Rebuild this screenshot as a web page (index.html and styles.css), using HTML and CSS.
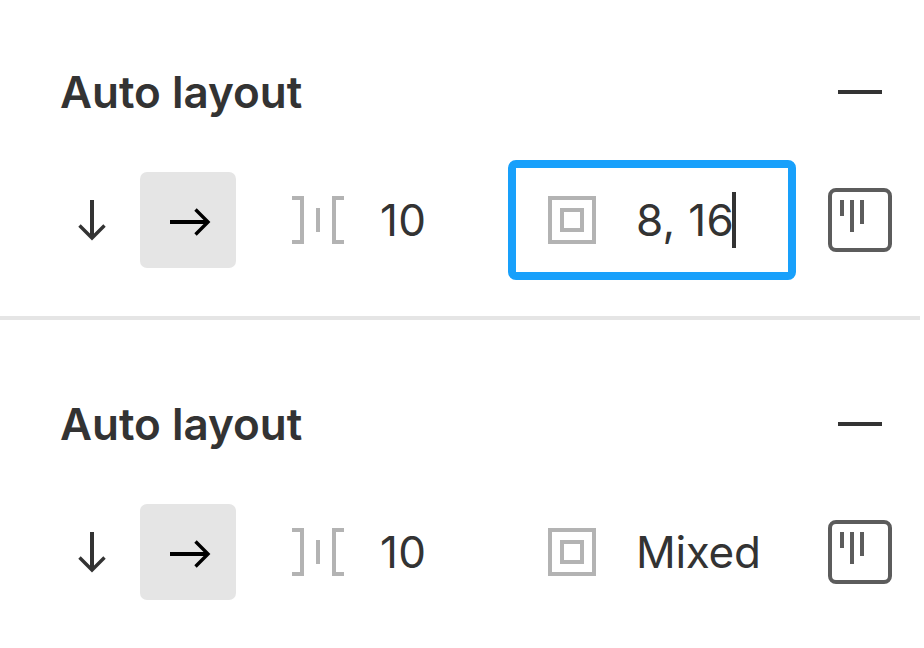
FILE: index.html
```html
<!DOCTYPE html>
<html lang="en">
<head>
<meta charset="utf-8">
<title>Auto layout</title>
<link rel="stylesheet" href="styles.css">
</head>
<body>
<svg class="defs" width="0" height="0">
  <symbol id="down" viewBox="0 0 32 48"><path d="M16 4V42" fill="none" stroke="currentColor" stroke-width="4"/><path d="M3.5 29.5L16 42L28.5 29.5" fill="none" stroke="currentColor" stroke-width="3.4"/></symbol>
  <symbol id="right" viewBox="0 0 48 32"><path d="M6 18H44" fill="none" stroke="currentColor" stroke-width="4"/><path d="M31.5 5.5L44 18L31.5 30.5" fill="none" stroke="currentColor" stroke-width="3.4"/></symbol>
  <symbol id="spacing" viewBox="0 0 52 48"><path d="M0 2H10V46H0M26 12V36M52 2H42V46H52" fill="none" stroke="currentColor" stroke-width="4"/></symbol>
  <symbol id="padding" viewBox="0 0 48 48"><path d="M2 2H46V46H2ZM14 14H34V34H14Z" fill="none" stroke="currentColor" stroke-width="4"/></symbol>
  <symbol id="align" viewBox="0 0 64 64"><rect x="2" y="2" width="60" height="60" rx="6" fill="none" stroke="currentColor" stroke-width="4"/><path d="M14 12V28M24 12V44M34 12V36" fill="none" stroke="currentColor" stroke-width="4"/></symbol>
</svg>
<main class="panels">
  <section class="panel">
    <header class="head"><h2 class="title">Auto layout</h2><span class="minus"></span></header>
    <div class="row">
      <span class="direction"><svg class="down"><use href="#down"/></svg></span>
      <span class="direction selected"><svg class="right"><use href="#right"/></svg></span>
      <div class="spacing"><svg class="gap"><use href="#spacing"/></svg><span class="value">10</span></div>
      <div class="field focused"><svg class="pad"><use href="#padding"/></svg><span class="value">8, 16</span><i class="caret"></i></div>
      <svg class="align"><use href="#align"/></svg>
    </div>
  </section>
  <section class="panel">
    <header class="head"><h2 class="title">Auto layout</h2><span class="minus"></span></header>
    <div class="row">
      <span class="direction"><svg class="down"><use href="#down"/></svg></span>
      <span class="direction selected"><svg class="right"><use href="#right"/></svg></span>
      <div class="spacing"><svg class="gap"><use href="#spacing"/></svg><span class="value">10</span></div>
      <div class="field"><svg class="pad"><use href="#padding"/></svg><span class="value word">Mixed</span></div>
      <svg class="align"><use href="#align"/></svg>
    </div>
  </section>
</main>
</body>
</html>
```
FILE: styles.css
```css
* { box-sizing: border-box; }
body { margin: 0; background: #fff; color: #333; font-family: Inter, sans-serif; overflow: hidden; }
.defs { display: block; }
svg { flex: none; }
.panels { width: 920px; height: 648px; overflow: hidden; }
.panel { height: 332px; }
.panel:first-child { height: 320px; border-bottom: 4px solid #e5e5e5; margin-bottom: 12px; }
.head { height: 160px; padding: 24px 38px 0 60px; display: flex; align-items: center; justify-content: space-between; }
.title { margin: 0; font-size: 44px; line-height: 56px; font-weight: 600; }
.minus { width: 44px; height: 4px; background: #333; }
.row { height: 120px; display: flex; align-items: center; padding-left: 44px; }
.direction { width: 96px; height: 96px; display: flex; align-items: center; justify-content: center; border-radius: 7px; }
.selected { background: #e5e5e5; color: #000; }
.down { width: 32px; height: 48px; }
.right { width: 48px; height: 32px; }
.spacing { width: 272px; padding-left: 56px; display: flex; align-items: center; }
.gap { width: 52px; height: 48px; margin-right: 36px; color: #b3b3b3; }
.field { width: 288px; height: 120px; border: 8px solid transparent; border-radius: 8px; padding-left: 32px; display: flex; align-items: center; }
.focused { border-color: #18a0fb; }
.pad { width: 48px; height: 48px; margin-right: 40px; color: #b3b3b3; }
.value { font-size: 44px; line-height: 56px; white-space: nowrap; letter-spacing: 0.3px; }
.word { letter-spacing: -0.3px; }
.caret { width: 4px; height: 56px; background: #333; margin-left: -2px; }
.align { width: 64px; height: 64px; margin-left: 32px; color: #5c5c5c; }
```
